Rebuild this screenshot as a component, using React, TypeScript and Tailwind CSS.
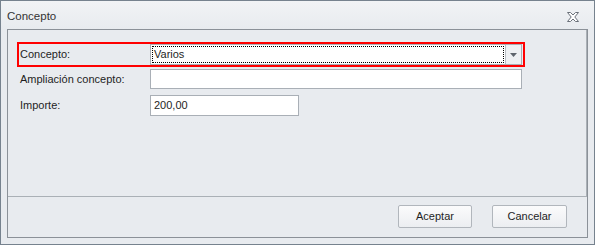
import React from "react";

export default function App() {
  const font = { fontFamily: '"Liberation Sans", Arial, sans-serif' };
  return (
    <div
      className="w-[595px] h-[245px] border border-[#76828e] bg-[#e8ebef] flex flex-col text-[11px] text-[#1e1e1e]"
      style={font}
    >
      {/* title bar */}
      <div className="h-[28px] flex items-center justify-between pl-[6px] pr-[15px] pt-[4px] bg-gradient-to-b from-[#f1f3f5] to-[#e8ebef]">
        <span className="text-[#333] text-[11.5px]">Concepto</span>
        <svg width="12" height="10" viewBox="0 0 12 10">
          <path
            d="M0.5 0.5 H3.5 L6 3 L8.5 0.5 H11.5 L7.8 5 L11.5 9.5 H8.5 L6 7 L3.5 9.5 H0.5 L4.2 5 Z"
            fill="#ffffff"
            stroke="#6a7079"
            strokeWidth="1"
            strokeLinejoin="round"
          />
        </svg>
      </div>

      {/* body */}
      <div className="mx-[6px] mb-[6px] flex-1 border border-[#8b9198] flex flex-col">
        <div className="flex-1 border-b border-r border-[#aab0b6] flex flex-col pt-[12px] pl-[9px]">
          {/* red highlighted row */}
          <div className="w-[508px] h-[25px] border-2 border-[#ff0000] flex items-center">
            <span className="w-[131px] pl-[1px]">Concepto:</span>
            <div className="w-[372px] h-[21px] border border-[#a9afb6] bg-white flex">
              <div className="flex-1 m-[1px] border border-dotted border-black flex items-center pl-[1px]">
                Varios
              </div>
              <div className="w-[16px] border-l border-[#b9bec4] bg-[#eef0f3] flex items-center justify-center">
                <svg width="7" height="4" viewBox="0 0 7 4">
                  <path d="M0 0 H7 L3.5 4 Z" fill="#5f656d" />
                </svg>
              </div>
            </div>
          </div>

          <div className="h-[20px] mt-[2px] flex items-center pl-[3px]">
            <span className="w-[130px]">Ampliación concepto:</span>
            <div className="w-[372px] h-[20px] border border-[#a9afb6] bg-white" />
          </div>

          <div className="h-[21px] mt-[6px] flex items-center pl-[3px]">
            <span className="w-[130px]">Importe:</span>
            <div className="w-[149px] h-[21px] border border-[#a9afb6] bg-white flex items-center pl-[3px]">
              200,00
            </div>
          </div>
        </div>

        {/* footer */}
        <div className="h-[40px] flex justify-end items-start pt-[8px] pr-[20px] gap-[20px]">
          <button className="w-[74px] h-[23px] border border-[#b1b6bc] rounded-[2px] bg-gradient-to-b from-[#fbfbfc] to-[#eceef1] text-[11px] text-[#1e1e1e]">
            Aceptar
          </button>
          <button className="w-[75px] h-[23px] border border-[#b1b6bc] rounded-[2px] bg-gradient-to-b from-[#fbfbfc] to-[#eceef1] text-[11px] text-[#1e1e1e]">
            Cancelar
          </button>
        </div>
      </div>
    </div>
  );
}
